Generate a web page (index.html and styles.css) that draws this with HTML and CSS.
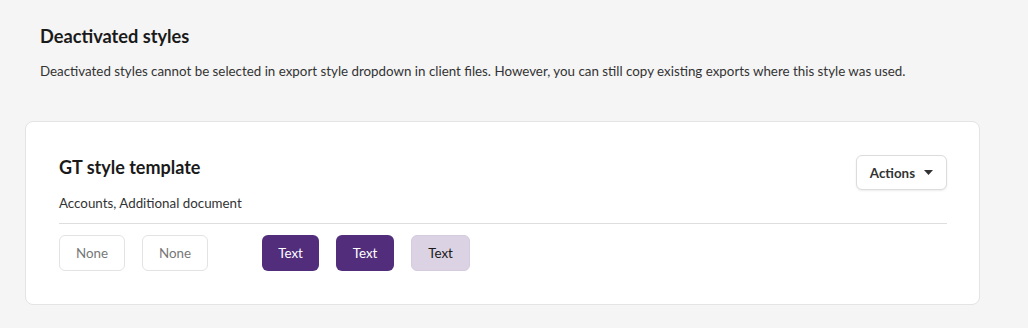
FILE: index.html
```html
<!DOCTYPE html>
<html lang="en">
<head>
  <meta charset="UTF-8" />
  <meta name="viewport" content="width=device-width, initial-scale=1.0" />
  <title>Deactivated styles</title>
  <link rel="stylesheet" href="styles.css">
</head>
<body>
  <section class="page">
    <div class="intro">
      <h2>Deactivated styles</h2>
      <p>Deactivated styles cannot be selected in export style dropdown in client files. However, you can still copy existing exports where this style was used.</p>
    </div>

    <div class="card">
      <div class="card-head">
        <div>
          <h3>GT style template</h3>
          <p class="meta">Accounts, Additional document</p>
        </div>
        <button class="actions">Actions
          <svg width="9" height="5" viewBox="0 0 9 5"><path d="M0 0h9L4.5 5z" fill="#333"/></svg>
        </button>
      </div>
      <div class="swatches">
        <div class="group">
          <span class="chip none">None</span>
          <span class="chip none">None</span>
        </div>
        <div class="group">
          <span class="chip dark">Text</span>
          <span class="chip dark">Text</span>
          <span class="chip light">Text</span>
        </div>
      </div>
    </div>
  </section>
</body>
</html>
```

FILE: styles.css
```css
body {
  margin: 0;
  font-family: Lato, "Open Sans", Arial, sans-serif;
  background: #f5f5f5;
  color: #1a1a1a;
}
.page {
  padding: 25px 48px 24px 25px;
}
.intro {
  padding-left: 15px;
}
h2 {
  margin: 0;
  font-size: 18.2px;
  line-height: 22px;
  font-weight: 700;
  color: #1a1a1a;
}
.intro p {
  margin: 16px 0 0;
  font-size: 13.35px;
  line-height: 16px;
  color: #333;
}
.card {
  margin-top: 42px;
  background: white;
  border: 1px solid #e4e4e4;
  border-radius: 8px;
  padding: 33px 32px 33px 33px;
}
.card-head {
  display: flex;
  justify-content: space-between;
  align-items: flex-start;
  border-bottom: 1px solid #dedede;
  padding-bottom: 12px;
}
h3 {
  margin: 0;
  font-size: 18px;
  line-height: 24px;
  font-weight: 700;
  color: #1a1a1a;
}
.meta {
  margin: 16px 0 0;
  font-size: 13.35px;
  line-height: 16px;
  color: #333;
}
.actions {
  display: flex;
  align-items: center;
  gap: 9px;
  height: 35px;
  padding: 0 13px;
  background: white;
  border: 1px solid #dcdcdc;
  border-radius: 6px;
  box-shadow: 0 1px 2px rgba(0,0,0,0.08);
  font-family: inherit;
  font-size: 13.35px;
  font-weight: 700;
  color: #333;
}
.swatches {
  display: flex;
  gap: 54px;
  margin-top: 11px;
}
.group {
  display: flex;
  gap: 17px;
}
.chip {
  display: flex;
  align-items: center;
  justify-content: center;
  height: 36px;
  box-sizing: border-box;
  border-radius: 6px;
  font-size: 13.35px;
}
.none {
  width: 66px;
  border: 1px solid #e3e3e3;
  color: #777;
}
.dark {
  width: 57px;
  background: #512d7b;
  color: white;
}
.dark + .dark {
  width: 58px;
}
.light {
  width: 59px;
  background: #dbd3e3;
  border: 1px solid #d4cbdd;
  color: #1a1a1a;
}
```
